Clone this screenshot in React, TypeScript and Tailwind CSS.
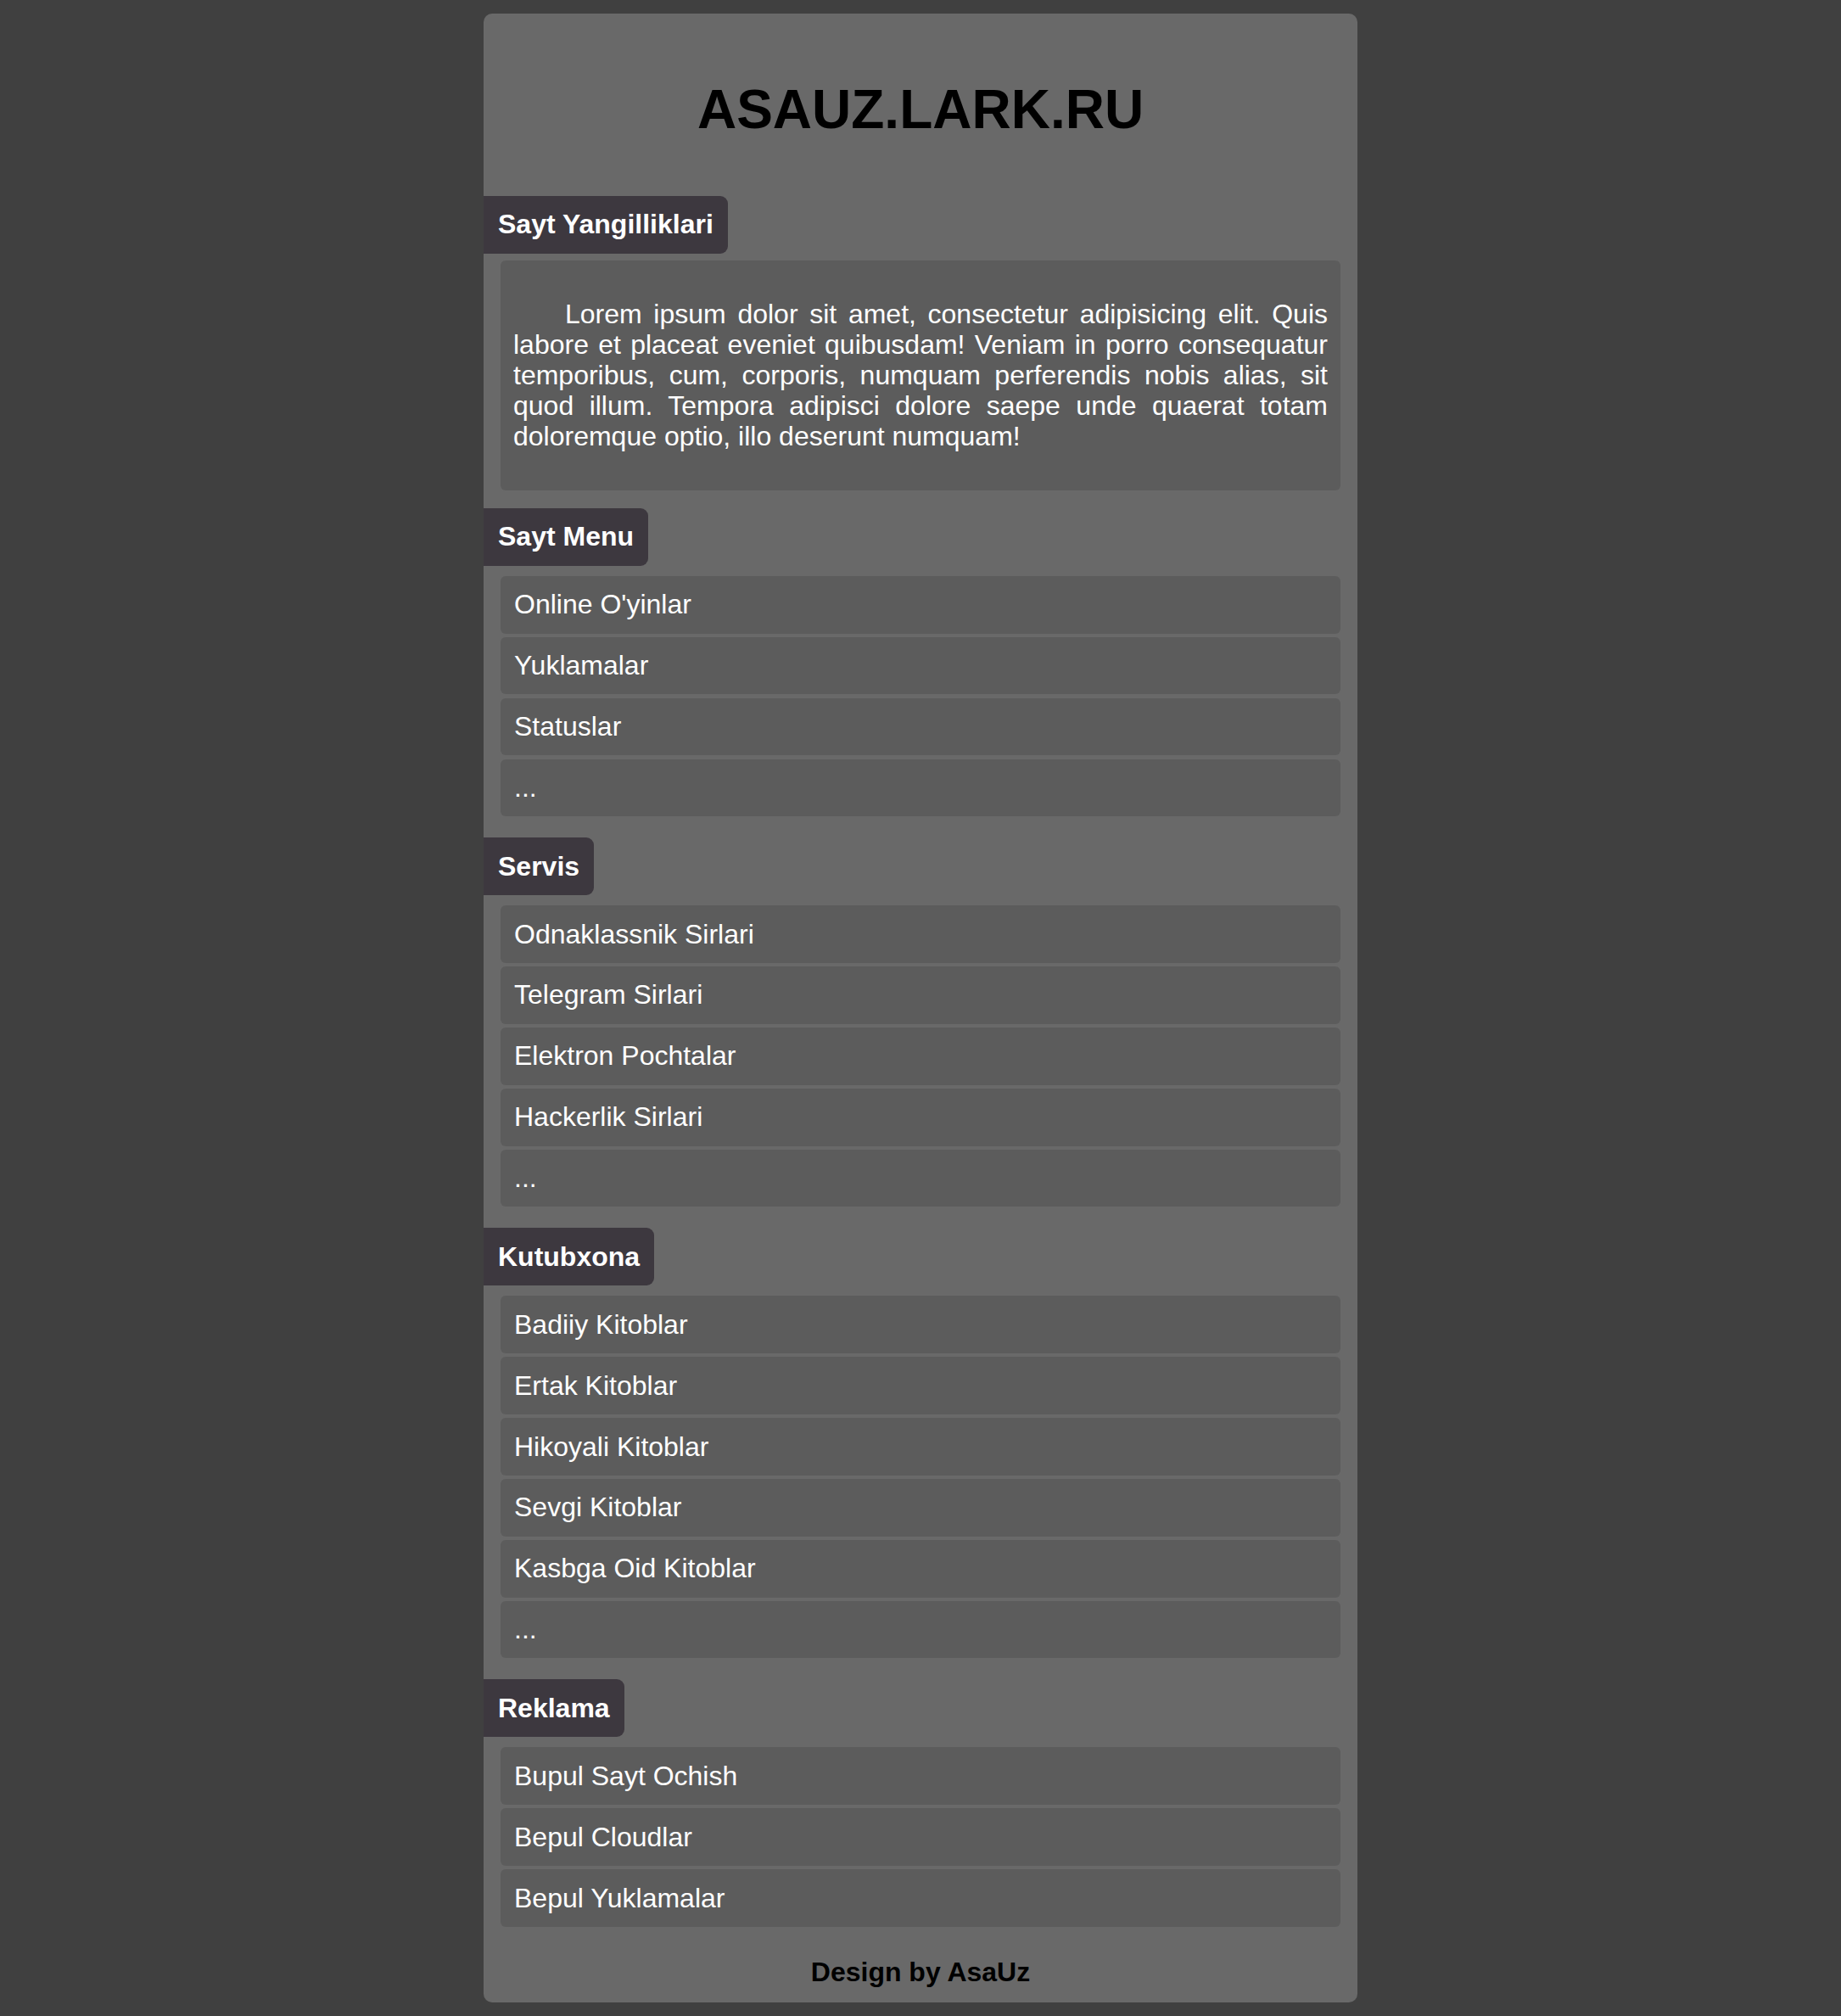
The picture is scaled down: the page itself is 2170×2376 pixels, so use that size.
const sections: { title: string; items: string[] }[] = [
  {
    title: "Sayt Menu",
    items: ["Online O'yinlar", "Yuklamalar", "Statuslar", "..."],
  },
  {
    title: "Servis",
    items: [
      "Odnaklassnik Sirlari",
      "Telegram Sirlari",
      "Elektron Pochtalar",
      "Hackerlik Sirlari",
      "...",
    ],
  },
  {
    title: "Kutubxona",
    items: [
      "Badiiy Kitoblar",
      "Ertak Kitoblar",
      "Hikoyali Kitoblar",
      "Sevgi Kitoblar",
      "Kasbga Oid Kitoblar",
      "...",
    ],
  },
  {
    title: "Reklama",
    items: ["Bupul Sayt Ochish", "Bepul Cloudlar", "Bepul Yuklamalar"],
  },
];

function SectionTitle({ children }: { children: string }) {
  return (
    <div className="flex">
      <h2 className="flex h-[67.5px] items-center rounded-r-[9px] bg-[#3d383f] px-[17px] text-[32px] font-bold text-white">
        {children}
      </h2>
    </div>
  );
}

function MenuList({ items }: { items: string[] }) {
  return (
    <ul className="mx-[20px] mt-[12.5px] flex flex-col gap-[4.3px]">
      {items.map((item, i) => (
        <li
          key={i}
          className="flex h-[67.6px] items-center rounded-[6px] bg-[#5c5c5c] px-[16px] text-[32px] text-white"
        >
          {item}
        </li>
      ))}
    </ul>
  );
}

export default function App() {
  return (
    <div
      className="min-h-screen bg-[#404040] py-[16px] leading-[normal]"
      style={{ fontFamily: '"Liberation Sans", Arial, sans-serif' }}
    >
      <div className="mx-auto w-[1030px] rounded-[10px] bg-[#696969]">
        <h1 className="pt-[76px] pb-[65px] text-center text-[64px] leading-[normal] font-bold text-black">
          ASAUZ.LARK.RU
        </h1>

        <SectionTitle>Sayt Yangilliklari</SectionTitle>
        <div className="mx-[20px] mt-[8px] rounded-[6px] bg-[#5c5c5c] px-[15px] pt-[45.5px] pb-[46px]">
          <p className="indent-[61px] text-justify text-[32px] leading-[36px] text-white">
            Lorem ipsum dolor sit amet, consectetur adipisicing elit. Quis labore et placeat
            eveniet quibusdam! Veniam in porro consequatur temporibus, cum, corporis, numquam
            perferendis nobis alias, sit quod illum. Tempora adipisci dolore saepe unde quaerat
            totam doloremque optio, illo deserunt numquam!
          </p>
        </div>

        {sections.map((s, i) => (
          <div key={s.title} className={i === 0 ? "mt-[21px]" : "mt-[25px]"}>
            <SectionTitle>{s.title}</SectionTitle>
            <MenuList items={s.items} />
          </div>
        ))}

        <p className="pt-[35px] pb-[17.5px] text-center text-[32px] leading-[normal] font-bold text-black">
          Design by AsaUz
        </p>
      </div>
    </div>
  );
}
